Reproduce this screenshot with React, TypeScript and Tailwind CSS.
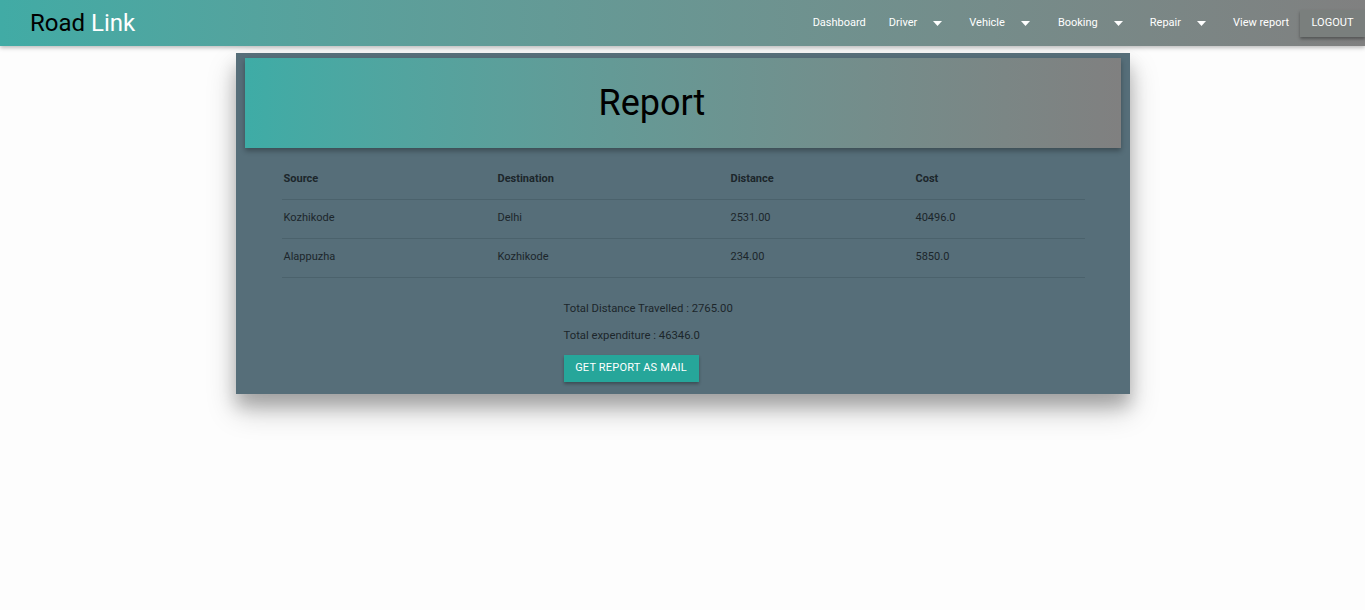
import React from "react";

interface Trip {
  source: string;
  destination: string;
  distance: string;
  cost: string;
}

const trips: Trip[] = [
  { source: "Kozhikode", destination: "Delhi", distance: "2531.00", cost: "40496.0" },
  { source: "Alappuzha", destination: "Kozhikode", distance: "234.00", cost: "5850.0" },
];

function Caret() {
  return (
    <svg width="9" height="5" viewBox="0 0 9 5" className="ml-[16px] mt-[1px]">
      <path d="M0 0h9L4.5 5z" fill="#ffffff" />
    </svg>
  );
}

function NavLink({ label, menu, gap }: { label: string; menu?: boolean; gap: string }) {
  return (
    <a className={`flex items-center text-[11px] text-white ${gap}`}>
      <span>{label}</span>
      {menu && <Caret />}
    </a>
  );
}

export default function App() {
  return (
    <div className="min-h-[610px] bg-[#fdfdfd] font-['Roboto',sans-serif]">
      <nav className="relative z-10 flex h-[46px] items-center bg-gradient-to-r from-[#41aba5] to-[#808080] shadow-[0_2px_4px_rgba(0,0,0,0.25)]">
        <div className="ml-[30px] text-[24px] leading-none">
          <span className="text-black">Road </span>
          <span className="text-white">Link</span>
        </div>
        <div className="ml-auto flex items-center">
          <NavLink label="Dashboard" gap="mr-[23px]" />
          <NavLink label="Driver" menu gap="mr-[27px]" />
          <NavLink label="Vehicle" menu gap="mr-[28px]" />
          <NavLink label="Booking" menu gap="mr-[27px]" />
          <NavLink label="Repair" menu gap="mr-[27px]" />
          <NavLink label="View report" gap="mr-[11px]" />
          <button className="h-[27px] w-[65px] bg-[#7a7f7d] text-[11px] text-white shadow-[0_2px_3px_rgba(0,0,0,0.35)]">
            LOGOUT
          </button>
        </div>
      </nav>

      <div className="flex justify-center pt-[7px]">
        <div className="w-[894px] bg-[#566e79] px-[9px] pt-[5px] pb-[12px] shadow-[0_16px_28px_rgba(0,0,0,0.22),0_12px_16px_rgba(0,0,0,0.2)]">
          <div className="flex h-[90px] items-center bg-gradient-to-r from-[#3eaca6] to-[#808080] pl-[354px] shadow-[0_3px_5px_rgba(0,0,0,0.3)]">
            <h1 className="text-[36px] leading-none text-black">Report</h1>
          </div>

          <table className="mt-[11px] ml-[37px] w-[803px] border-collapse text-left text-[11px] text-[#1c262b]">
            <thead>
              <tr className="h-[40px] border-b border-[#4b626c]">
                <th className="w-[214px] pl-[2px] font-bold">Source</th>
                <th className="w-[233px] pl-[2px] font-bold">Destination</th>
                <th className="w-[185px] pl-[2px] font-bold">Distance</th>
                <th className="pl-[2px] font-bold">Cost</th>
              </tr>
            </thead>
            <tbody>
              {trips.map((t) => (
                <tr key={t.source} className="h-[39px] border-b border-[#4b626c]">
                  <td className="pl-[2px]">{t.source}</td>
                  <td className="pl-[2px]">{t.destination}</td>
                  <td className="pl-[2px]">{t.distance}</td>
                  <td className="pl-[2px]">{t.cost}</td>
                </tr>
              ))}
            </tbody>
          </table>

          <div className="ml-[319px] mt-[24px] flex flex-col items-start text-[11.3px] text-[#1c262b]">
            <p className="leading-[14px]">Total Distance Travelled : 2765.00</p>
            <p className="mt-[13px] leading-[14px]">Total expenditure : 46346.0</p>
            <button className="mt-[12px] h-[27px] w-[135px] bg-[#26a69a] text-[11px] tracking-[0.2px] text-white shadow-[0_2px_3px_rgba(0,0,0,0.3)]">
              GET REPORT AS MAIL
            </button>
          </div>
        </div>
      </div>
    </div>
  );
}
